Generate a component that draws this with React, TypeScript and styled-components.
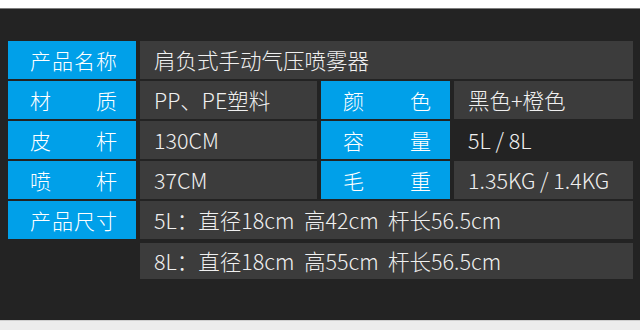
import React from "react";
import styled, { createGlobalStyle } from "styled-components";

const GlobalStyle = createGlobalStyle`
  html, body {
    margin: 0;
    padding: 0;
    background: #ececec;
  }
  body {
    font-family: "Noto Sans CJK SC", "Noto Sans", sans-serif;
  }
`;

const TopStrip = styled.div`
  height: 8px;
  background: #ffffff;
`;

const Panel = styled.div`
  box-sizing: border-box;
  height: 313px;
  background: #232323;
  border-top: 1px solid #7d7d7d;
  border-bottom: 1px solid #cfcfcf;
  padding: 32px 7px 0 8px;
`;

const SpecGrid = styled.div`
  display: grid;
  grid-template-columns: 128px 177px 129px 179px;
  grid-auto-rows: 38px;
  column-gap: 4px;
  row-gap: 2px;
`;

const Label = styled.div`
  display: flex;
  justify-content: space-between;
  align-items: center;
  padding: 0 19px 0 22px;
  background: #00a0e9;
  color: #ffffff;
  font-size: 21px;
  font-weight: 300;
  line-height: 1;
`;

const Value = styled.div<{ $span?: number; $plain?: boolean; $shift?: boolean }>`
  grid-column: span ${(p) => p.$span ?? 1};
  display: flex;
  align-items: center;
  padding-left: 14px;
  background: ${(p) => (p.$plain ? "#232323" : "#3c3c3c")};
  color: #f0f0f0;
  font-size: 21.5px;
  font-weight: 300;
  line-height: 1;
  white-space: pre;
  margin-top: ${(p) => (p.$shift ? "2px" : "0")};
`;

const Spacer = styled.div``;

const LabelCell: React.FC<{ text: string }> = ({ text }) => (
  <Label>
    {text.split("").map((c, i) => (
      <span key={i}>{c}</span>
    ))}
  </Label>
);

const App: React.FC = () => {
  return (
    <>
      <GlobalStyle />
      <TopStrip />
      <Panel>
        <SpecGrid>
          <LabelCell text="产品名称" />
          <Value $span={3}>肩负式手动气压喷雾器</Value>

          <LabelCell text="材质" />
          <Value>PP、PE塑料</Value>
          <LabelCell text="颜色" />
          <Value>黑色+橙色</Value>

          <LabelCell text="皮杆" />
          <Value>130CM</Value>
          <LabelCell text="容量" />
          <Value $plain>5L / 8L</Value>

          <LabelCell text="喷杆" />
          <Value>37CM</Value>
          <LabelCell text="毛重" />
          <Value>1.35KG / 1.4KG</Value>

          <LabelCell text="产品尺寸" />
          <Value $span={3}>5L：直径18cm  高42cm  杆长56.5cm</Value>

          <Spacer />
          <Value $span={3} $shift>
            8L：直径18cm  高55cm  杆长56.5cm
          </Value>
        </SpecGrid>
      </Panel>
    </>
  );
};

export default App;
